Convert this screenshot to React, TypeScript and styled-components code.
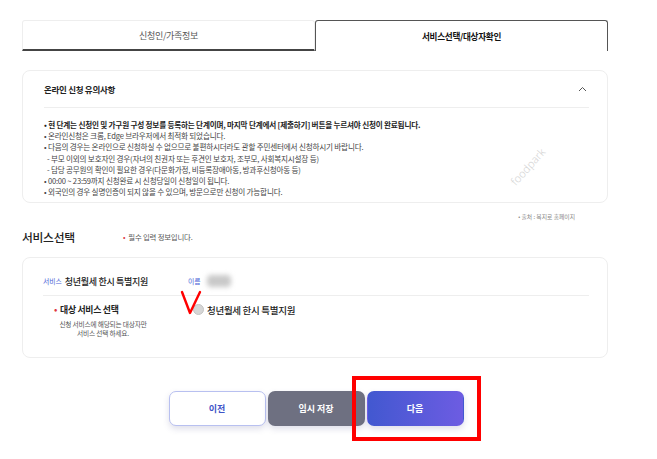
import React from "react";
import styled, { createGlobalStyle } from "styled-components";

const Global = createGlobalStyle`
  html, body { margin: 0; padding: 0; background: #fff; }
  body { font-family: "Noto Sans CJK KR", "Noto Sans", sans-serif; color: #222; }
  * { box-sizing: border-box; }
`;

const Page = styled.div`
  width: 657px;
  height: 459px;
  padding: 20px 49px 0 22px;
  position: relative;
  overflow: hidden;
`;

const Tabs = styled.div`
  display: flex;
  height: 31px;
`;

const Tab = styled.div<{ $active?: boolean }>`
  flex: 1;
  display: flex;
  align-items: center;
  justify-content: center;
  font-size: ${(p) => (p.$active ? "8.6px" : "9px")};
  letter-spacing: -0.3px;
  color: ${(p) => (p.$active ? "#111" : "#555")};
  font-weight: ${(p) => (p.$active ? 700 : 400)};
  border: 1px solid ${(p) => (p.$active ? "#555" : "#eee")};
  border-bottom: ${(p) => (p.$active ? "none" : "2px solid #444")};
  border-radius: 3px 3px 0 0;
  padding-top: ${(p) => (p.$active ? "0" : "1px")};
`;

const Card = styled.div`
  border: 1px solid #eeeeee;
  border-radius: 8px;
  background: #fff;
  position: relative;
`;

const NoticeCard = styled(Card)`
  margin-top: 19px;
  height: 133px;
  padding: 0 18px 0 21px;
`;

const NoticeHead = styled.div`
  height: 37px;
  display: flex;
  align-items: center;
  justify-content: space-between;
  border-bottom: 1px solid #eeeeee;
  font-size: 8.5px;
  font-weight: 700;
  color: #222;
  letter-spacing: -0.3px;
`;

const Chevron = styled.svg`
  width: 9px;
  height: 6px;
  margin-right: 2px;
`;

const NoticeList = styled.ul`
  list-style: none;
  margin: 0;
  padding: 11px 0 0 0;
  font-size: 7.6px;
  line-height: 11.2px;
  color: #444;
  letter-spacing: -0.2px;
`;

const Item = styled.li<{ $sub?: boolean; $strong?: boolean }>`
  white-space: nowrap;
  padding-left: ${(p) => (p.$sub ? "3px" : "0")};
  font-weight: ${(p) => (p.$strong ? 700 : 400)};
  color: ${(p) => (p.$strong ? "#222" : "#444")};
`;

const Watermark = styled.div`
  position: absolute;
  left: 482px;
  top: 88px;
  transform: rotate(-48deg);
  font-size: 11px;
  font-weight: 300;
  color: #d4d4d4;
  font-family: "Noto Sans", sans-serif;
`;

const Source = styled.div`
  display: flex;
  justify-content: flex-end;
  padding-right: 33px;
  margin-top: 10px;
  height: 8px;
  font-size: 5.8px;
  line-height: 8px;
  color: #888;
`;

const SectionHead = styled.div`
  display: flex;
  align-items: center;
  margin-top: 3px;
  height: 24px;
`;

const SectionTitle = styled.div`
  font-size: 11.8px;
  font-weight: 500;
  color: #222;
  width: 101px;
  letter-spacing: -0.3px;
`;

const Required = styled.div`
  font-size: 7.4px;
  color: #555;
  letter-spacing: -0.2px;
`;

const RedDot = styled.span`
  color: #e0383e;
  margin-right: 3px;
`;

const ServiceCard = styled(Card)`
  margin-top: 9px;
  height: 101px;
  padding: 0 18px 0 20px;
`;

const ServiceRow = styled.div`
  height: 38px;
  display: flex;
  align-items: center;
  padding-top: 9px;
  border-bottom: 1px solid #eeeeee;
`;

const InfoLabel = styled.span`
  font-size: 6.8px;
  color: #4a5fd6;
  margin-right: 3px;
`;

const InfoValue = styled.span`
  font-size: 9px;
  font-weight: 500;
  color: #222;
  letter-spacing: -0.3px;
`;

const ServiceCol = styled.div`
  width: 145px;
  display: flex;
  align-items: center;
`;

const NameCol = styled.div`
  display: flex;
  align-items: center;
`;

const Blurred = styled.div`
  width: 24px;
  height: 12px;
  margin-left: 3px;
  background: #c9c9c9;
  border-radius: 4px;
  filter: blur(2.5px);
`;

const SelectRow = styled.div`
  display: flex;
  padding-top: 7px;
`;

const SelectLabel = styled.div`
  width: 150px;
  display: flex;
  flex-direction: column;
`;

const SelectTitle = styled.div`
  margin-left: 11px;
  font-size: 8.9px;
  font-weight: 700;
  color: #222;
  letter-spacing: -0.3px;
  line-height: 13px;
`;

const SelectDesc = styled.div`
  width: 120px;
  margin-top: 4px;
  font-size: 6.7px;
  line-height: 8.8px;
  color: #555;
  text-align: center;
  letter-spacing: -0.2px;
`;

const RadioOption = styled.label`
  display: flex;
  align-items: center;
  height: 13px;
  font-size: 9.5px;
  font-weight: 500;
  color: #222;
  letter-spacing: -0.3px;
`;

const Radio = styled.span`
  width: 11px;
  height: 11px;
  border-radius: 50%;
  background: #d6d6d6;
  border: 1px solid #c4c4c4;
  margin-right: 3px;
`;

const Buttons = styled.div`
  display: flex;
  justify-content: center;
  gap: 2px;
  margin-top: 33px;
  padding-left: 2px;
`;

const Btn = styled.button<{ $kind: "prev" | "save" | "next" }>`
  width: 97px;
  height: 35px;
  border-radius: 7px;
  font-family: inherit;
  font-size: 9px;
  font-weight: 700;
  cursor: pointer;
  box-shadow: 0 3px 6px rgba(80, 80, 140, 0.18);
  border: 1px solid
    ${(p) => (p.$kind === "prev" ? "#b8c0f0" : "transparent")};
  color: ${(p) => (p.$kind === "prev" ? "#3f54c8" : "#fff")};
  background: ${(p) =>
    p.$kind === "prev"
      ? "#fff"
      : p.$kind === "save"
      ? "#6e7081"
      : "linear-gradient(90deg, #4258d0 0%, #6d5ce2 100%)"};
`;

const Highlight = styled.div`
  position: absolute;
  left: 352px;
  top: 376px;
  width: 129px;
  height: 65px;
  border: 4px solid #ff0000;
`;

const CheckMark = styled.svg`
  position: absolute;
  left: 180px;
  top: 290px;
  width: 22px;
  height: 26px;
`;

export default function App() {
  return (
    <>
      <Global />
      <Page>
        <Tabs>
          <Tab>신청인/가족정보</Tab>
          <Tab $active>서비스선택/대상자확인</Tab>
        </Tabs>

        <NoticeCard>
          <NoticeHead>
            <span>온라인 신청 유의사항</span>
            <Chevron viewBox="0 0 9 6">
              <path d="M1 5 L4.5 1.5 L8 5" fill="none" stroke="#555" strokeWidth="1" />
            </Chevron>
          </NoticeHead>
          <NoticeList>
            <Item $strong>• 현 단계는 신청인 및 가구원 구성 정보를 등록하는 단계이며, 마지막 단계에서 [제출하기] 버튼을 누르셔야 신청이 완료됩니다.</Item>
            <Item>• 온라인신청은 크롬, Edge 브라우저에서 최적화 되었습니다.</Item>
            <Item>• 다음의 경우는 온라인으로 신청하실 수 없으므로 불편하시더라도 관할 주민센터에서 신청하시기 바랍니다.</Item>
            <Item $sub>- 부모 이외의 보호자인 경우(자녀의 친권자 또는 후견인 보호자, 조부모, 사회복지시설장 등)</Item>
            <Item $sub>- 담당 공무원의 확인이 필요한 경우(다문화가정, 비등록장애아동, 방과후신청아동 등)</Item>
            <Item>• 00:00 ~ 23:59까지 신청완료 시 신청당일이 신청일이 됩니다.</Item>
            <Item>• 외국인의 경우 실명인증이 되지 않을 수 있으며, 방문으로만 신청이 가능합니다.</Item>
          </NoticeList>
          <Watermark>foodpark</Watermark>
        </NoticeCard>

        <Source>• 출처 : 복지로 홈페이지</Source>

        <SectionHead>
          <SectionTitle>서비스선택</SectionTitle>
          <Required>
            <RedDot>•</RedDot>필수 입력 정보입니다.
          </Required>
        </SectionHead>

        <ServiceCard>
          <ServiceRow>
            <ServiceCol>
              <InfoLabel>서비스</InfoLabel>
              <InfoValue>청년월세 한시 특별지원</InfoValue>
            </ServiceCol>
            <NameCol>
              <InfoLabel>이름</InfoLabel>
              <Blurred />
            </NameCol>
          </ServiceRow>
          <SelectRow>
            <SelectLabel>
              <SelectTitle>
                <RedDot>•</RedDot>대상 서비스 선택
              </SelectTitle>
              <SelectDesc>
                신청 서비스에 해당되는 대상자만
                <br />
                서비스 선택 하세요.
              </SelectDesc>
            </SelectLabel>
            <RadioOption>
              <Radio />
              청년월세 한시 특별지원
            </RadioOption>
          </SelectRow>
        </ServiceCard>

        <Buttons>
          <Btn $kind="prev">이전</Btn>
          <Btn $kind="save">임시 저장</Btn>
          <Btn $kind="next">다음</Btn>
        </Buttons>

        <CheckMark viewBox="0 0 22 26">
          <path d="M2 2 L10 23 L20 2" fill="none" stroke="#ff0000" strokeWidth="2.4" strokeLinecap="round" strokeLinejoin="round" />
        </CheckMark>
        <Highlight />
      </Page>
    </>
  );
}
